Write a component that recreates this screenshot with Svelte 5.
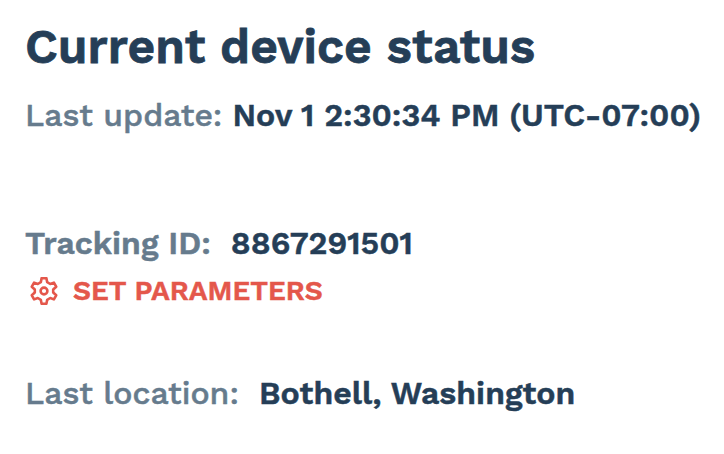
<script lang="ts">
    const device = {
        updated: "Nov 1 2:30:34 PM (UTC-07:00)",
        trackingId: "8867291501",
        location: "Bothell, Washington",
    }
</script>

<section class="status">
    <h1>Current device status</h1>
    <p class="row updated">
        <span class="label">Last update:</span>
        <span class="value">{device.updated}</span>
    </p>
    <p class="row tracking">
        <span class="label">Tracking ID:</span>
        <span class="value">{device.trackingId}</span>
    </p>
    <button class="parameters">
        <svg viewBox="-14 -14 28 28" aria-hidden="true">
            <path
                d="M-2.4-12.8H2.4L3.2-8.8L6.2-7L9.9-8.4L12.2-4.3L9.2-1.5V1.5L12.2 4.3L9.9 8.4L6.2 7L3.2 8.8L2.4 12.8H-2.4L-3.2 8.8L-6.2 7L-9.9 8.4L-12.2 4.3L-9.2 1.5V-1.5L-12.2-4.3L-9.9-8.4L-6.2-7L-3.2-8.8Z"
            />
            <circle r="3.4" />
        </svg>
        <span>SET PARAMETERS</span>
    </button>
    <p class="row location">
        <span class="label">Last location:</span>
        <span class="value">{device.location}</span>
    </p>
</section>

<style>
    :global(body) {
        background: #fff;
    }
    .status {
        display: flex;
        flex-direction: column;
        align-items: flex-start;
        height: 454px;
        padding: 16px 0 0 25px;
        box-sizing: border-box;
        color: #253e57;
        font-family: "Work Sans", Inter, "Liberation Sans", sans-serif;
        white-space: nowrap;
        -webkit-text-stroke: 0.5px currentColor;
    }
    h1 {
        margin: 0;
        font-size: 48px;
        font-weight: 600;
        line-height: 62px;
        -webkit-text-stroke-width: 0.8px;
    }
    .row {
        display: flex;
        margin: 0;
        font-size: 32px;
        line-height: 40px;
    }
    .label {
        color: #667b8d;
        font-weight: 500;
        -webkit-text-stroke-color: #667b8d;
    }
    .value {
        font-weight: 600;
    }
    .updated {
        gap: 10px;
        margin-top: 17px;
    }
    .tracking {
        gap: 20px;
        margin-top: 88px;
    }
    .tracking .label {
        font-weight: 600;
    }
    .location {
        gap: 20px;
        margin-top: 63px;
    }
    .parameters {
        display: flex;
        align-items: center;
        gap: 15px;
        margin: 9px 0 0 5px;
        padding: 0;
        border: 0;
        background: none;
        color: #e4574b;
        font: inherit;
        font-size: 28px;
        font-weight: 600;
        line-height: 38px;
        -webkit-text-stroke-color: #e4574b;
    }
    svg {
        width: 28px;
        height: 28px;
        fill: none;
        stroke: currentColor;
        stroke-width: 2.6;
        stroke-linejoin: round;
    }
</style>
